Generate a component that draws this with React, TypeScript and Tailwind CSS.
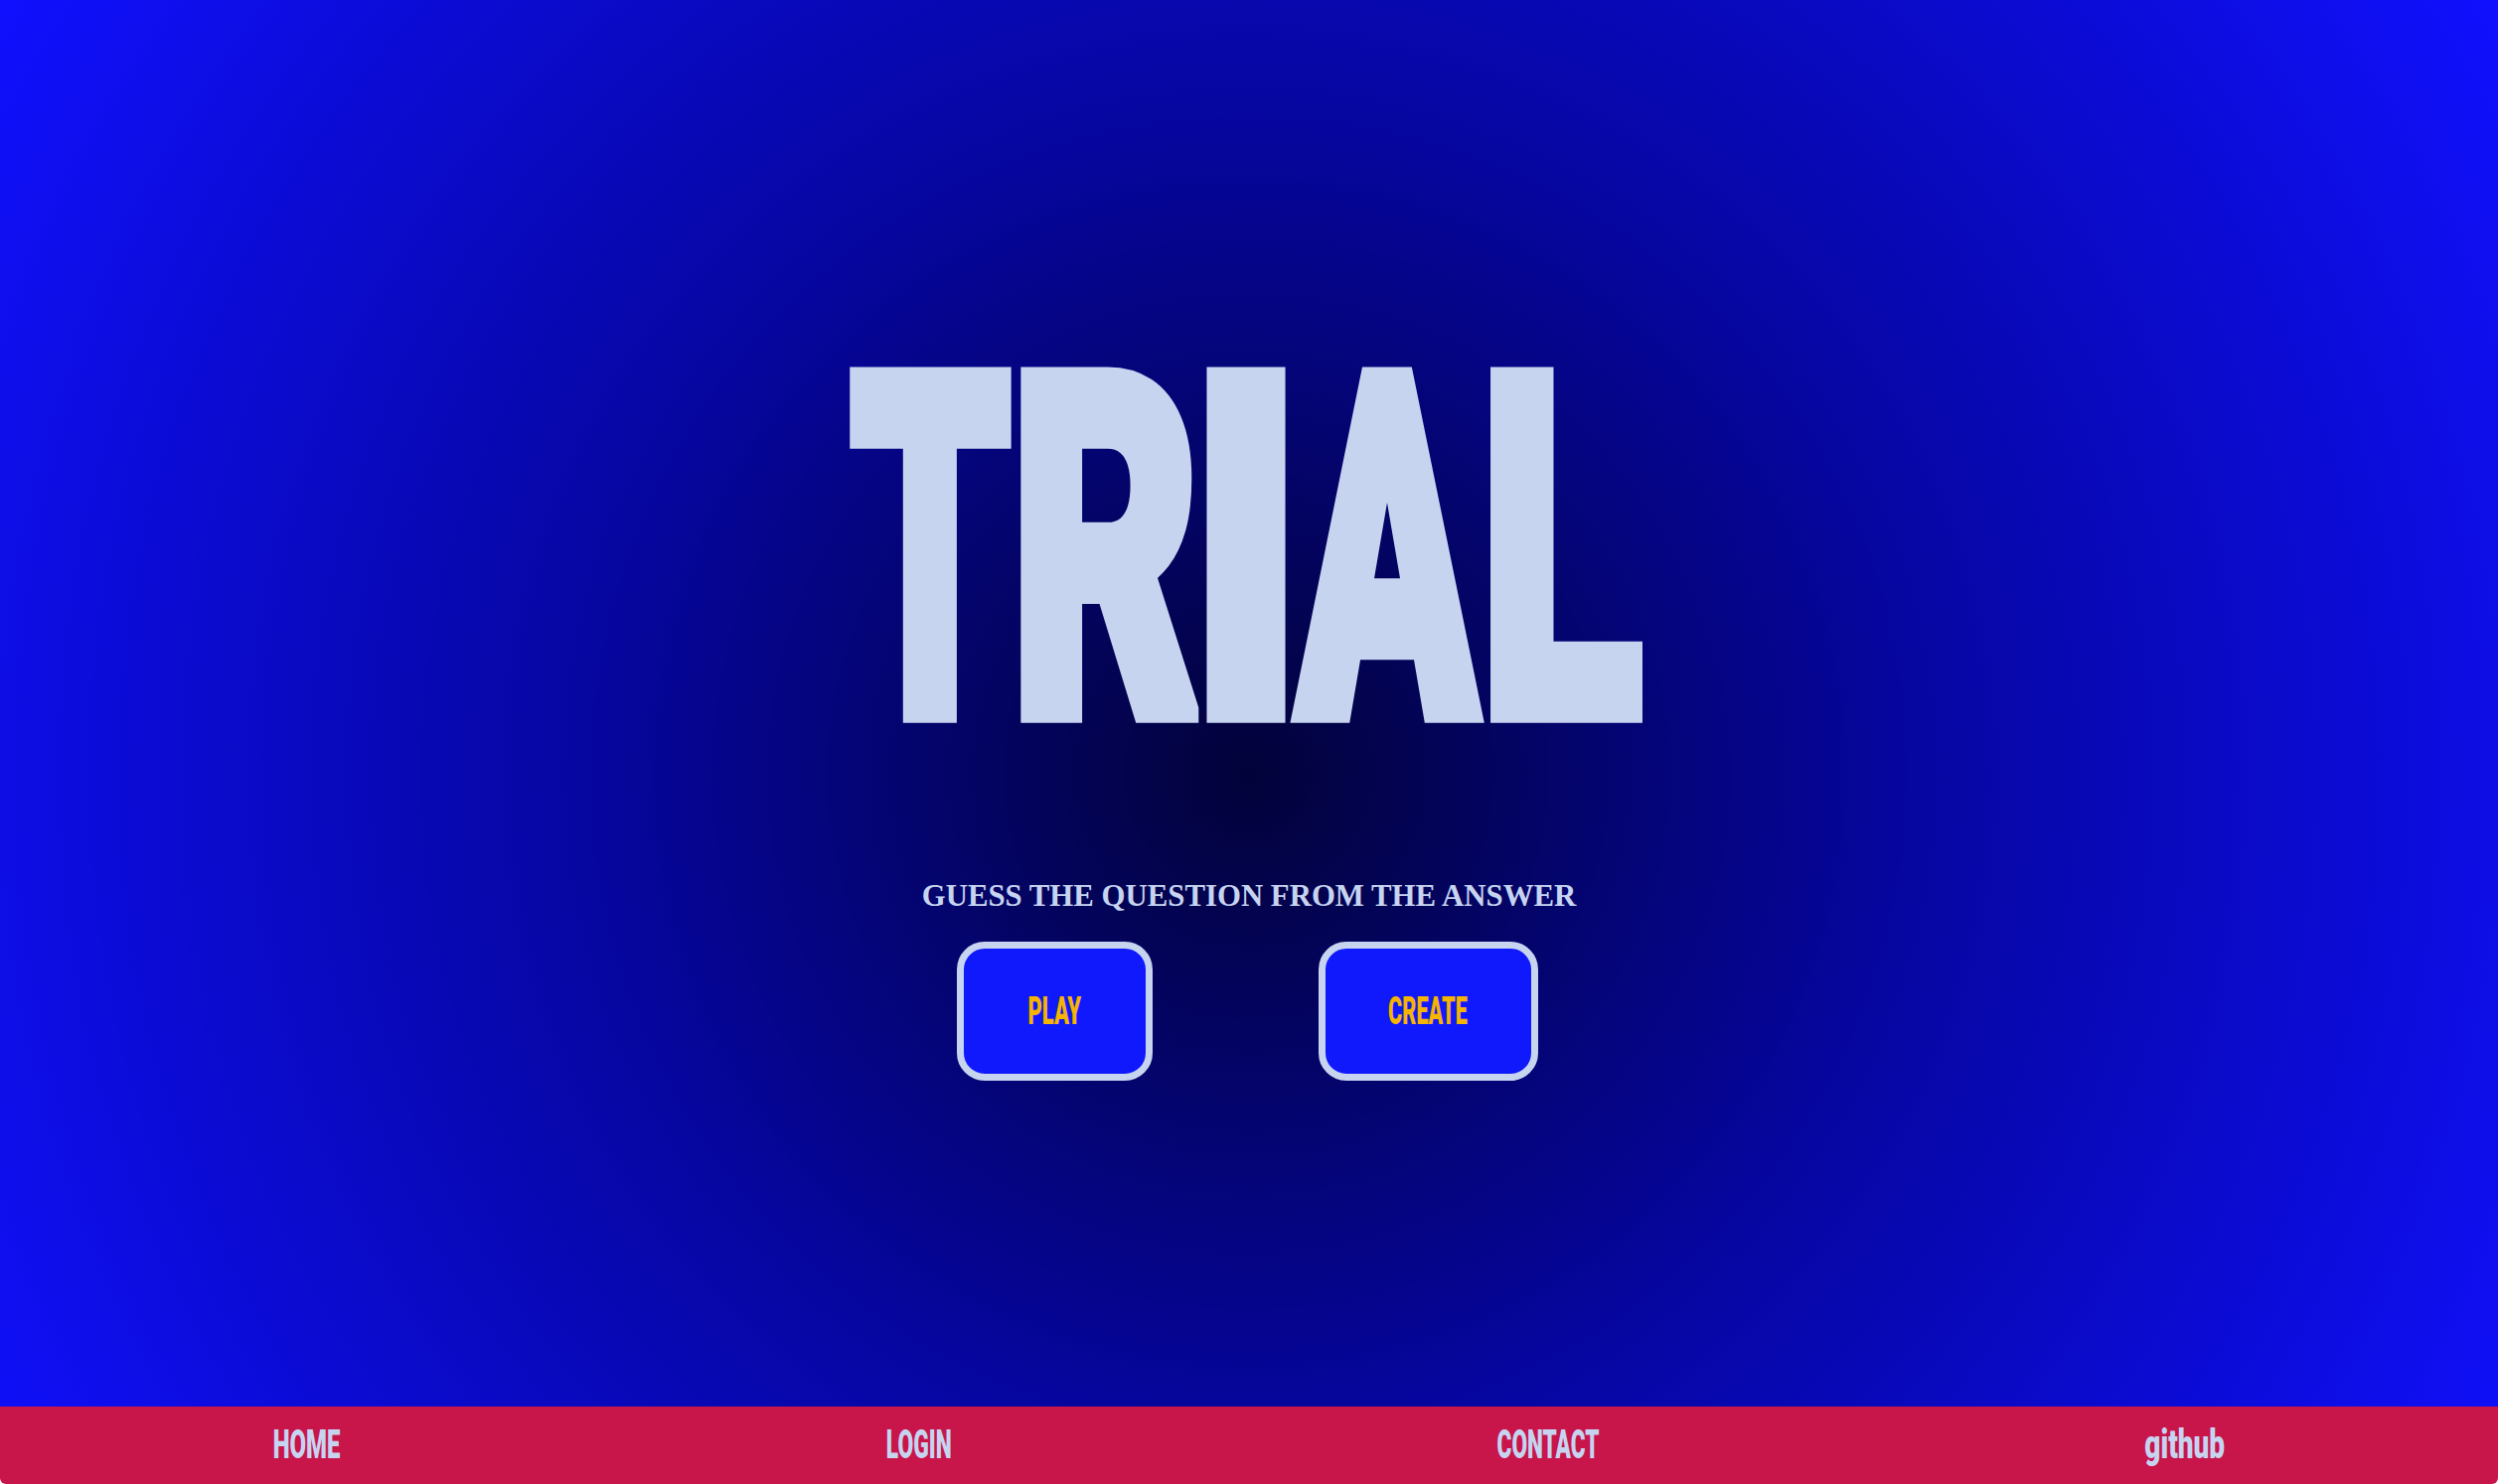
import React from "react";

const letters = [
  { ch: "T", w: "w-[163px]", sx: "scale-x-[2.56]", mr: "mr-[6px]", tx: "translate-x-[-3px]" },
  { ch: "R", w: "w-[180px]", sx: "scale-x-[2.92]", mr: "mr-[8px]", tx: "translate-x-[-5px]" },
  { ch: "I", w: "w-[79px]", sx: "scale-x-[3.75]", mr: "mr-[5px]", tx: "translate-x-[-1px]" },
  { ch: "A", w: "w-[196px]", sx: "scale-x-[2.63]", mr: "mr-[8px]", tx: "translate-x-[-1px]" },
  { ch: "L", w: "w-[152px]", sx: "scale-x-[3.0]", mr: "", tx: "translate-x-[-8px]" },
];

const navItems = [
  { label: "HOME", w: "w-[68px]", sx: "scale-x-[0.6]" },
  { label: "LOGIN", w: "w-[65px]", sx: "scale-x-[0.57]" },
  { label: "CONTACT", w: "w-[102px]", sx: "scale-x-[0.565]" },
  { label: "github", w: "w-[81px]", sx: "scale-x-[0.7]" },
];

export default function App() {
  return (
    <div className="w-full min-h-[1494px] flex flex-col font-['Roboto','Liberation_Sans',sans-serif]">
      <main className="h-[1416px] w-full flex flex-col items-center pt-[370px] bg-[radial-gradient(circle_at_50%_55%,#02023a_0%,#0606a0_45%,#1010ff_100%)]">
        <h1 className="flex h-[356px] text-[#c6d4f0]">
          {letters.map((l) => (
            <span
              key={l.ch}
              className={`${l.w} ${l.mr} h-[356px] flex items-center justify-center`}
            >
              <span
                className={`inline-block text-[100px] leading-none font-black ${l.sx} scale-y-[4.77] ${l.tx} translate-y-[8px] [-webkit-text-stroke:4px_#c6d4f0]`}
              >
                {l.ch}
              </span>
            </span>
          ))}
        </h1>

        <p className="mt-[161px] font-['Liberation_Serif',serif] font-bold text-[30.8px] leading-none text-[#c6d4f0]">
          GUESS THE QUESTION FROM THE ANSWER
        </p>

        <div className="mt-[30px] flex gap-[167px] -translate-x-[2px]">
          <button className="w-[197px] h-[140px] rounded-[28px] border-[7px] border-[#c6d4f0] bg-[#1019fc] flex items-center justify-center">
            <span className="inline-block text-[38px] leading-none font-black text-[#f5b400] scale-x-[0.58]">
              PLAY
            </span>
          </button>
          <button className="w-[221px] h-[140px] rounded-[28px] border-[7px] border-[#c6d4f0] bg-[#1019fc] flex items-center justify-center">
            <span className="inline-block text-[38px] leading-none font-black text-[#f5b400] scale-x-[0.57]">
              CREATE
            </span>
          </button>
        </div>
      </main>

      <footer className="h-[78px] w-full bg-[#c8154a] flex items-center justify-around rounded-b-[6px]">
        {navItems.map((n) => (
          <a key={n.label} className={`${n.w} flex justify-center cursor-pointer`}>
            <span className={`inline-block whitespace-nowrap text-[40px] leading-none font-black text-[#c6d4f0] ${n.sx}`}>
              {n.label}
            </span>
          </a>
        ))}
      </footer>
    </div>
  );
}
